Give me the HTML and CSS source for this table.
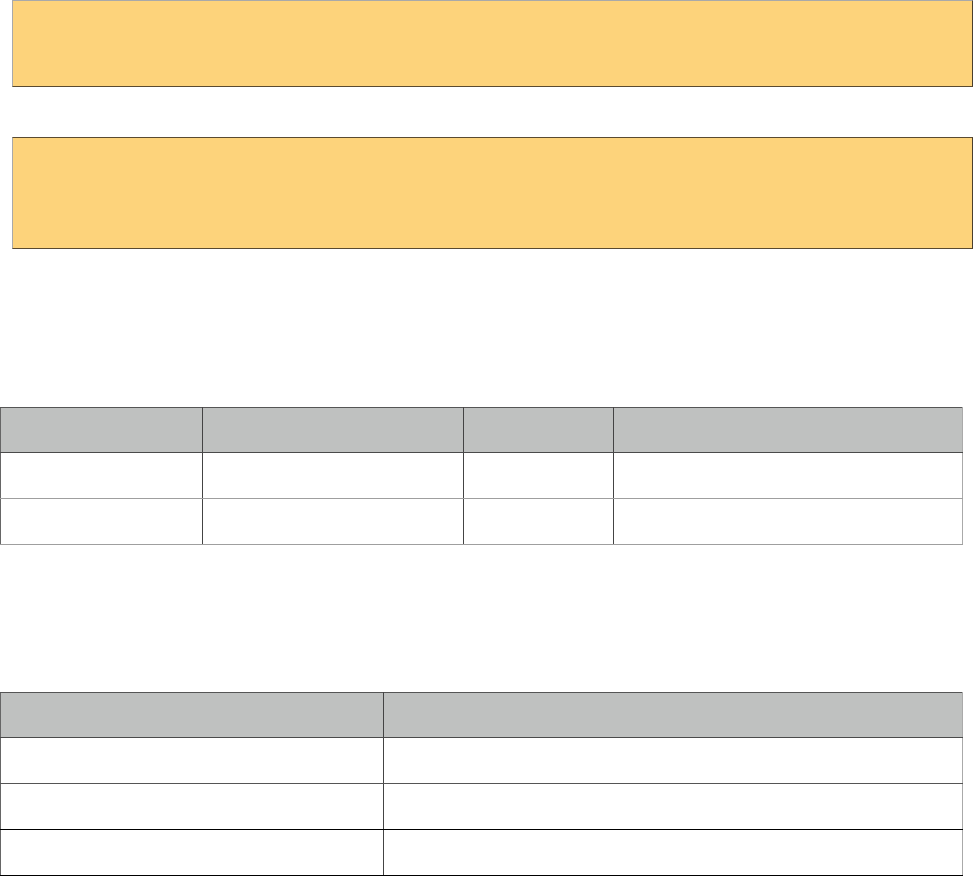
FILE: index.html
```html
<!DOCTYPE html>
<html>
<head>
<meta charset="utf-8">
<link rel="stylesheet" href="styles.css">
</head>
<body>
<div class="page">
  <div class="note note-a"></div>
  <div class="note note-b"></div>
  <table class="grid grid-a">
    <colgroup><col class="c1"><col class="c2"><col class="c3"><col class="c4"></colgroup>
    <thead><tr><th></th><th></th><th class="soft"></th><th class="hard"></th></tr></thead>
    <tbody>
      <tr><td></td><td></td><td class="soft"></td><td class="hard"></td></tr>
      <tr><td></td><td></td><td class="soft"></td><td class="hard"></td></tr>
    </tbody>
  </table>
  <table class="grid grid-b">
    <colgroup><col class="d1"><col class="d2"></colgroup>
    <thead><tr><th></th><th></th></tr></thead>
    <tbody>
      <tr><td></td><td class="soft"></td></tr>
      <tr><td></td><td class="soft"></td></tr>
      <tr class="last"><td></td><td class="soft"></td></tr>
    </tbody>
  </table>
</div>
</body>
</html>
```
FILE: styles.css
```css
html, body { margin: 0; padding: 0; background: #fff; }
body { font-family: "Liberation Sans", Arial, sans-serif; }
.page { display: flex; flex-direction: column; width: 973px; }
.note {
  margin-left: 12px;
  width: 961px;
  box-sizing: border-box;
  background: #fdd37b;
  border-style: solid;
  border-width: 1px;
  border-color: #a9a9a9 #4a3f2c #5a4a30 #a9a9a9;
}
.note-a { height: 87px; }
.note-b { height: 112px; margin-top: 50px; border-color: #5a4a30 #4a3f2c #5a4a30 #a9a9a9; }
.grid {
  border-collapse: collapse;
  table-layout: fixed;
  width: 962px;
}
.grid-a { margin-top: 158px; }
.grid-b { margin-top: 147px; }
.grid th, .grid td { padding: 0; border: 1px solid #9f9f9f; }
.grid th { background: #bfc1c0; height: 44px; border-top: 1px solid #555; border-bottom: 1px solid #4a4a4a; border-left-color: #555; border-right-color: #444; }
.grid td { height: 45px; border-left-color: #444; border-right-color: #444; }
.grid tr > :first-child { border-left: 1px solid #666; }
.grid tr > :last-child { border-right: 1px solid #aaa; }
.grid-a .soft { border-left-color: #aaa; }
.grid-a .hard { border-left-color: #000; }
.grid-a th.soft { border-left-color: #777; }
.grid-a th.hard { border-left-color: #000; }
.grid-b td { border-bottom-color: #555; }
.grid-b td.soft { border-left-color: #aaa; }
.grid-b tbody tr:nth-child(2) td { border-bottom-color: #000; }
.grid-b tr.last td { border-bottom-color: #000; }
.c1 { width: 202px; } .c2 { width: 261px; } .c3 { width: 150px; } .c4 { width: 349px; }
.d1 { width: 383px; } .d2 { width: 579px; }
```
